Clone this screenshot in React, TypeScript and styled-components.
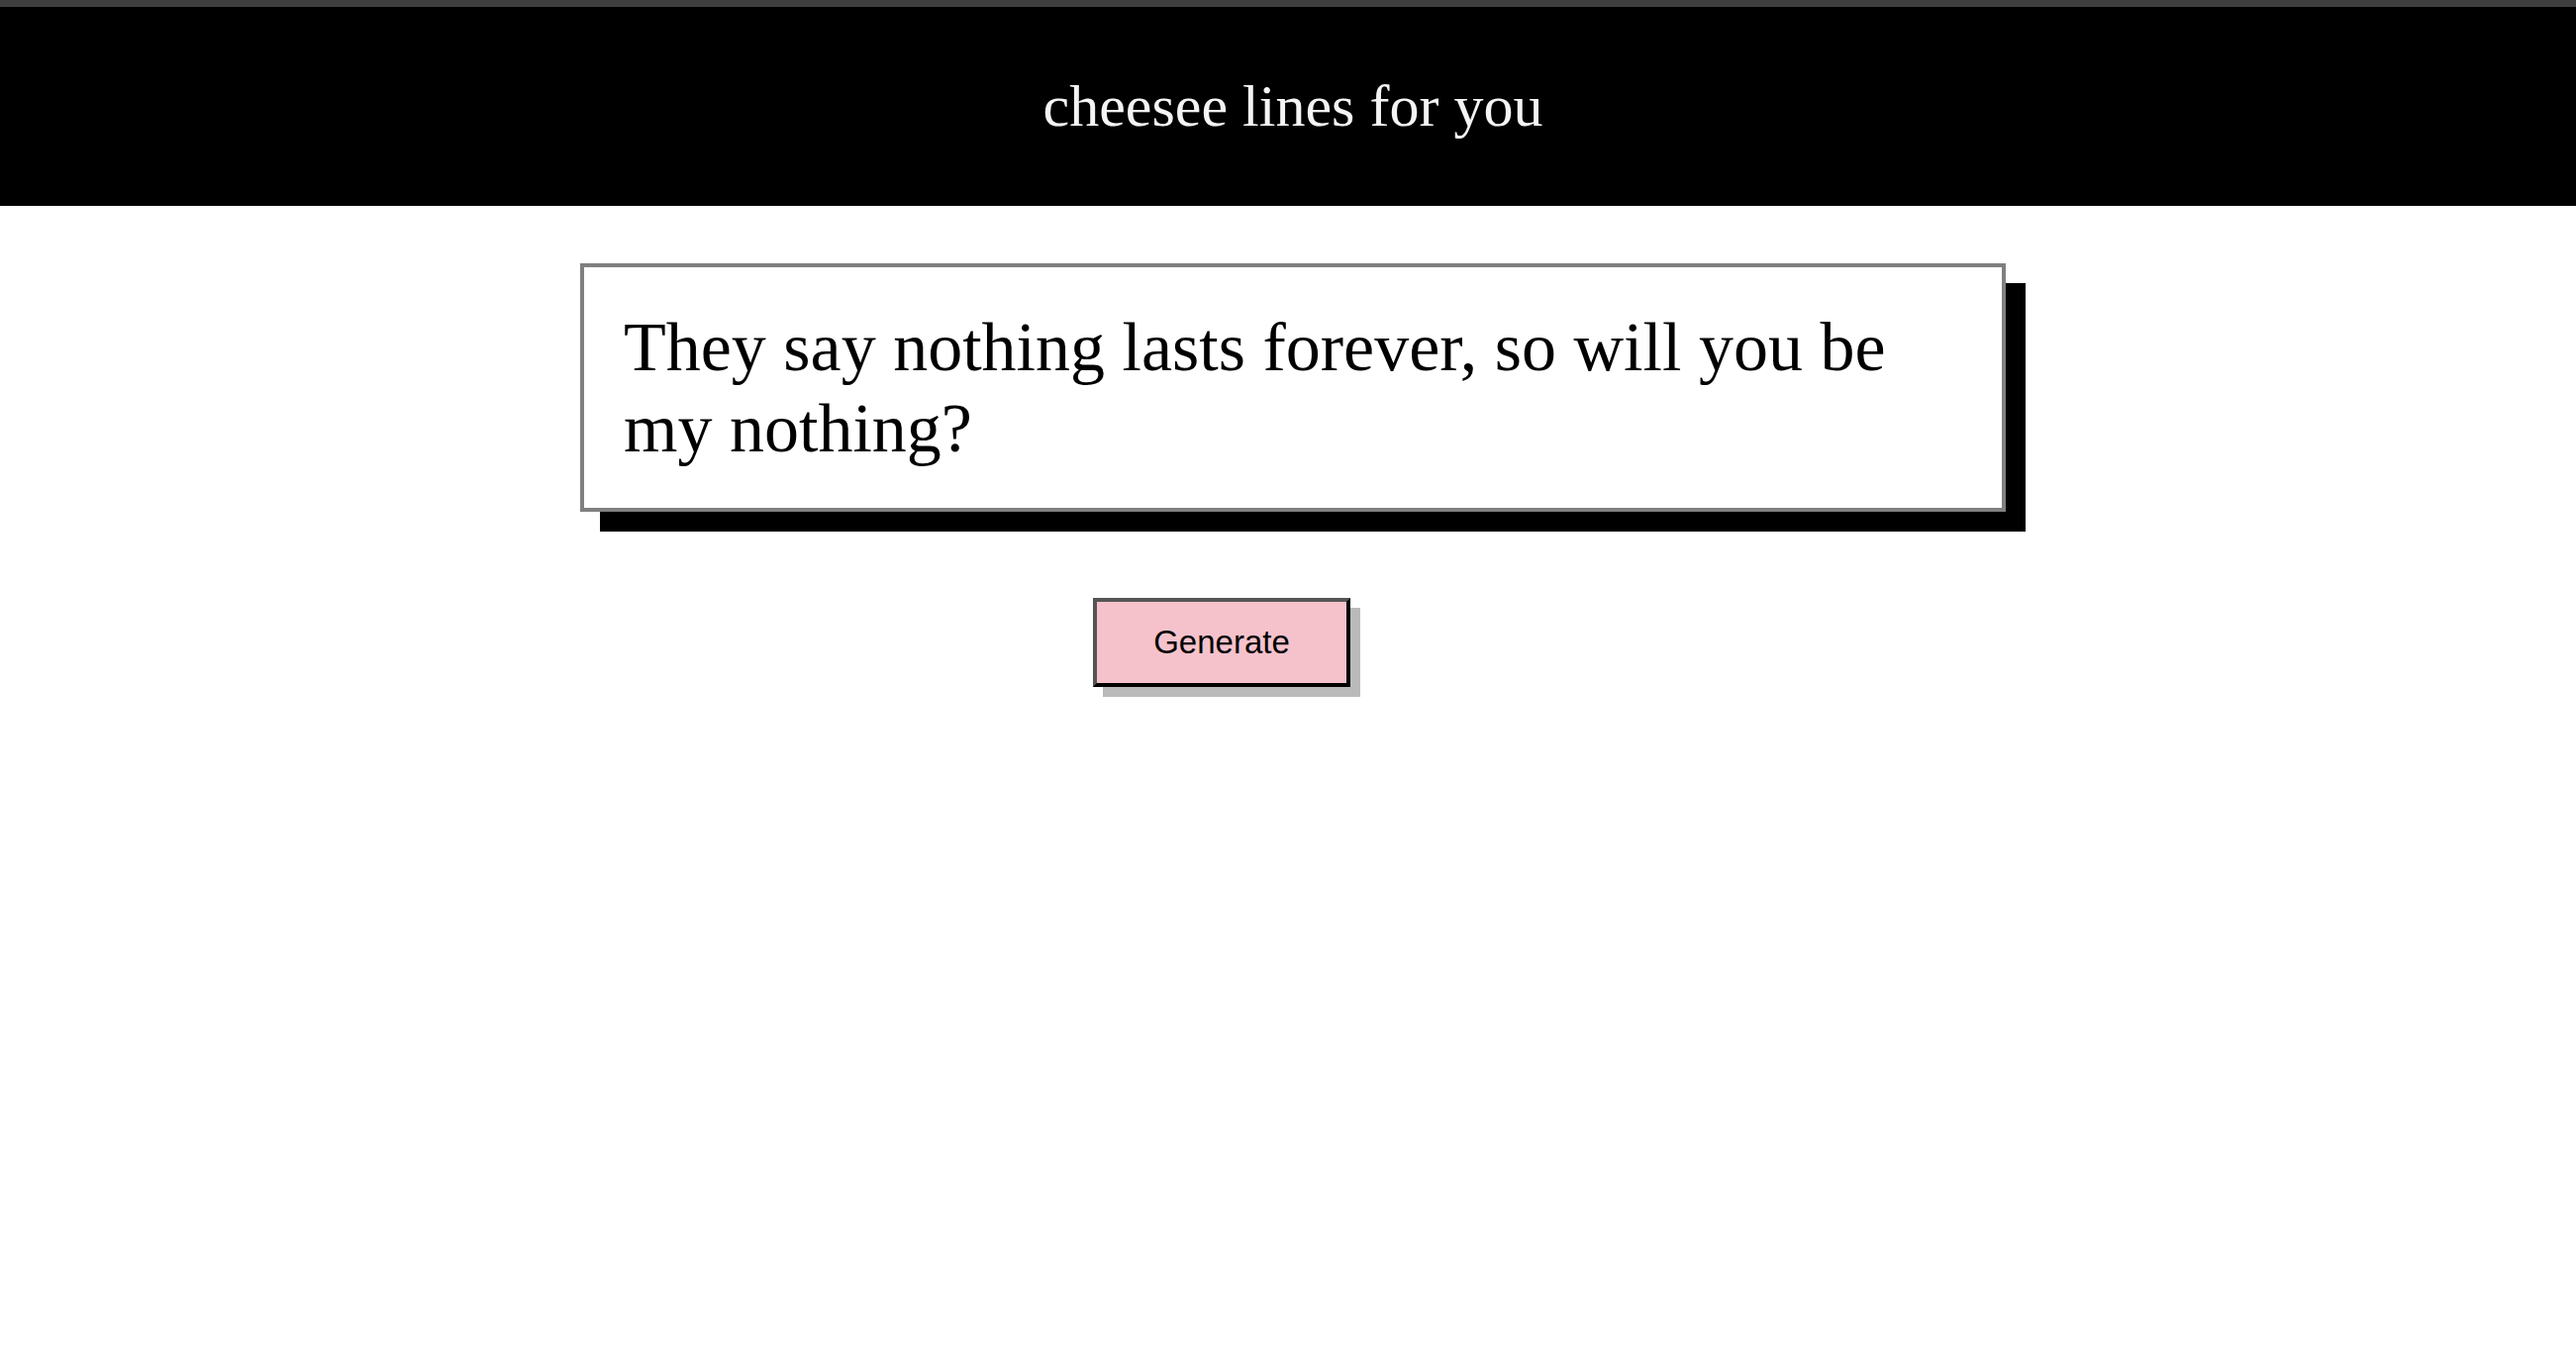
import React from "react";
import styled, { createGlobalStyle } from "styled-components";

const GlobalStyle = createGlobalStyle`
  html, body {
    margin: 0;
    padding: 0;
    background: #ffffff;
  }
  body {
    font-family: "Liberation Serif", "Times New Roman", serif;
    min-height: 100vh;
  }
`;

const Page = styled.div`
  display: flex;
  flex-direction: column;
  min-height: 100vh;
  background: #ffffff;
`;

const Header = styled.header`
  height: 201px;
  border-top: 7px solid #3e3e3e;
  background: #000000;
  display: flex;
  align-items: center;
  justify-content: center;
  padding-left: 10px;
`;

const Title = styled.h1`
  margin: 0;
  font-family: "Liberation Serif", "Times New Roman", serif;
  font-weight: 400;
  font-size: 60px;
  line-height: 69px;
  color: #f4f4f4;
`;

const Main = styled.main`
  display: flex;
  flex-direction: column;
  align-items: flex-start;
  padding-top: 58px;
`;

const LineCard = styled.div`
  box-sizing: border-box;
  width: 1440px;
  margin-left: calc(50% - 715px);
  padding: 40px 40px;
  border: 4px solid #808080;
  background: #ffffff;
  box-shadow: 20px 20px 0 #000000;
`;

const LineText = styled.p`
  margin: 0;
  font-family: "Liberation Serif", "Times New Roman", serif;
  font-size: 70px;
  line-height: 81.5px;
  color: #000000;
`;

const GenerateButton = styled.button`
  box-sizing: border-box;
  width: 260px;
  height: 90px;
  margin-top: 87px;
  margin-left: calc(50% - 197px);
  padding: 0;
  border-style: solid;
  border-width: 4px;
  border-color: #555555 #000000 #000000 #555555;
  background: #f5c2cc;
  box-shadow: 10px 10px 0 #bababa;
  font-family: "Liberation Sans", Arial, sans-serif;
  font-size: 33px;
  color: #000000;
  cursor: pointer;
`;

export default function App() {
  return (
    <>
      <GlobalStyle />
      <Page>
        <Header>
          <Title>cheesee lines for you</Title>
        </Header>
        <Main>
          <LineCard>
            <LineText>
              They say nothing lasts forever, so will you be my nothing?
            </LineText>
          </LineCard>
          <GenerateButton type="button">Generate</GenerateButton>
        </Main>
      </Page>
    </>
  );
}
